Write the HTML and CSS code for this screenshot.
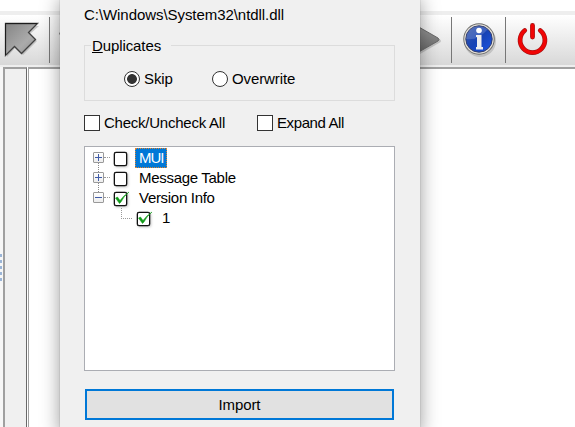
FILE: index.html
```html
<!DOCTYPE html>
<html lang="en">
<head>
<meta charset="utf-8">
<title>Import resources</title>
<link rel="stylesheet" href="styles.css">
</head>
<body>
<div class="window">
  <div class="toolbar">
    <div class="tools-left">
      <svg class="arrow" width="40" height="48" viewBox="0 0 40 48">
        <defs><linearGradient id="metal" x2="1" y2="1"><stop stop-color="#858585"/><stop offset=".6" stop-color="#ababab"/><stop offset="1" stop-color="#888"/></linearGradient></defs>
        <path d="M7 9H39L30 17L37 24L23 38L15 31L7 40Z" fill="#777" opacity=".35"/>
        <path d="M5.5 6.5H37.5L28.5 15.5L35.5 22.5L21.5 36.5L14.5 29.5L5.5 38.5Z" fill="url(#metal)" stroke="#414141" stroke-width="1.3"/>
        <path d="M5.5 38V6.5H37" fill="none" stroke="#1c1c1c"/>
      </svg>
      <i class="separator"></i>
      <svg class="down" width="15" height="20" viewBox="0 0 15 20"><path d="M0 3Q0 1 2 1H14V16Z" fill="#888"/></svg>
    </div>
    <div class="tools-right">
      <svg class="play" width="24" height="48" viewBox="0 0 24 48">
        <defs><linearGradient id="play" x2="0" y2="1"><stop stop-color="#999"/><stop offset="1" stop-color="#666"/></linearGradient></defs>
        <path d="M0 12L19 22Q23 24 19 26L0 37Z" fill="#999" opacity=".5"/>
        <path d="M-3 9L18 21Q20 22.5 18 24L-3 36Z" fill="url(#play)" stroke="#686868"/>
      </svg>
      <i class="separator"></i>
      <svg class="info" width="53" height="48" viewBox="0 0 53 48">
        <defs><linearGradient id="blue" x2="1" y2="1"><stop stop-color="#3858aa"/><stop offset=".5" stop-color="#1743b5"/><stop offset="1" stop-color="#1b55e4"/></linearGradient></defs>
        <circle cx="28" cy="24" r="16" fill="#888" opacity=".35"/>
        <circle cx="27" cy="22" r="15.7" fill="#686868"/>
        <circle cx="27" cy="22" r="14.8" fill="#e3dfd6"/>
        <circle cx="27" cy="22" r="13.2" fill="url(#blue)" stroke="#343f70"/>
        <path d="M14 22Q26 24 36 12Q31 9 25 9Q15 11 14 22Z" fill="#fff" opacity=".16"/>
        <circle cx="27" cy="13.5" r="2.8" fill="#fff"/>
        <path d="M24 18H29.5V30H31V32.5H24V30H25V20H24Z" fill="#eee"/>
      </svg>
      <i class="separator"></i>
      <svg class="power" width="54" height="48" viewBox="0 0 54 48">
        <g fill="none" stroke-linecap="round"><path d="M18.7 13.5A12.4 12.4 0 1 0 34.3 13.5M26.5 8.5V20" stroke="#a51212" stroke-width="4.8"/><path d="M18.7 13.5A12.4 12.4 0 1 0 34.3 13.5M26.5 8.5V20" stroke="#f00505" stroke-width="3.5"/></g>
      </svg>
    </div>
  </div>
  <div class="workspace">
    <div class="splitter"><i></i><i></i><i></i><i></i><i></i></div>
    <div class="side"></div>
    <div class="content"></div>
  </div>
</div>
<div class="dialog">
  <div class="path">C:\Windows\System32\ntdll.dll</div>
  <fieldset>
    <legend><u>D</u>uplicates</legend>
    <div class="radio-row">
      <span class="radio checked"></span><span class="skip">Skip</span>
      <span class="radio"></span><span>Overwrite</span>
    </div>
  </fieldset>
  <div class="checks">
    <span class="check"></span><span class="all">Check/Uncheck All</span>
    <span class="check"></span><span class="expand">Expand All</span>
  </div>
  <div class="tree">
    <div class="row"><span class="expander plus"></span><i class="dots"></i><span class="box"></span><span class="label selected">MUI</span></div>
    <div class="row"><span class="expander plus"></span><i class="dots"></i><span class="box"></span><span class="label">Message Table</span></div>
    <div class="row"><span class="expander"></span><i class="dots"></i><span class="box"><svg width="18" height="16" viewBox="0 0 18 16"><path d="M1.5 7L5.5 12.5L7 11Q10 5 15 1Q9 5 6 9.5L3.5 6Z" fill="#109a18" stroke="#109a18" stroke-width=".5"/></svg></span><span class="label">Version Info</span></div>
    <div class="row child"><i class="branch"></i><span class="box"><svg width="18" height="16" viewBox="0 0 18 16"><path d="M1.5 7L5.5 12.5L7 11Q10 5 15 1Q9 5 6 9.5L3.5 6Z" fill="#109a18" stroke="#109a18" stroke-width=".5"/></svg></span><span class="label">1</span></div>
  </div>
  <div class="import">Import</div>
</div>
</body>
</html>
```
FILE: styles.css
```css
* { box-sizing: border-box; }
html { overflow: hidden; }
body { position: relative; margin: 0; width: 575px; height: 427px; overflow: hidden; background: #fff; color: #000; font: 15px/20px "Liberation Sans", sans-serif; }
svg { display: block; flex: none; }
.window { height: 427px; display: flex; flex-direction: column; padding-top: 11px; }
.toolbar { height: 56px; flex: none; border-top: 4px solid #eee; border-bottom: 2px solid #eee; background: linear-gradient(#fff, #d8d8d8) padding-box; display: flex; justify-content: space-between; }
.tools-left, .tools-right { display: flex; padding-top: 2px; }
.tools-left .separator { margin-left: 9px; }
.tools-right { width: 155px; }
.tools-right .play + .separator { margin-left: 7px; }
.separator { width: 1px; height: 46px; flex: none; background: #777; }
.down { margin: 14px 0 0 9px; }
.workspace { flex: 1; display: flex; }
.splitter { width: 3px; padding-top: 187px; background: #f7f7f7; }
.splitter i { display: block; width: 2px; height: 3px; margin-bottom: 3px; background: #9bb5d7; }
.side { width: 24px; border: solid #a0a0a0; border-width: 2px 1px 0 2px; border-right-color: #696969; background: #f0f0f0; }
.content { flex: 1; margin-left: 1px; border-left: 1px solid #a0a0a0; border-top: 2px solid #a0a0a0; }
.dialog { position: absolute; left: 60px; top: -10px; width: 360px; height: 437px; padding: 15px 25px 0 24px; background: #f0f0f0; box-shadow: 0 0 1px rgba(0,0,0,.3), 0 9px 18px rgba(0,0,0,.4); }
.path { height: 30px; letter-spacing: -.06px; }
fieldset { height: 66px; margin: 0; padding: 0 0 0 39px; border: 1px solid #dcdcdc; min-width: 0; width: 311px; }
fieldset, .import { font: inherit; }
legend { height: 20px; line-height: 22px; margin-left: -33px; padding: 0 10px 0 1px; letter-spacing: -.1px; }
.radio-row, .checks { display: flex; align-items: center; }
.radio-row { margin-top: 14px; letter-spacing: -.1px; }
.radio { width: 16px; height: 16px; margin-right: 4px; border: 1px solid #333; border-radius: 50%; background: #fff; flex: none; }
.checked { background: radial-gradient(circle, #333 4.5px, #fff 5.3px); }
.skip { width: 68px; }
.checks { margin-top: 12px; height: 20px; }
.check { width: 16px; height: 16px; border: 1px solid #333; background: #fff; margin-right: 4px; }
.all { width: 153px; letter-spacing: -.24px; }
.expand { letter-spacing: -.4px; }
.tree { width: 311px; height: 225px; margin-top: 13px; padding: 1px 0 0 8px; border: 1px solid #abadb3; background: #fff; }
.row { height: 20px; display: flex; align-items: center; }
.expander { width: 11px; height: 11px; margin-top: -1px; border: 1px solid #999; border-radius: 1px; background: linear-gradient(#405ca8,#405ca8) center/7px 1px no-repeat, linear-gradient(#fff,#ededed); }
.plus { background: linear-gradient(#405ca8,#405ca8) center/7px 1px no-repeat, linear-gradient(#405ca8,#405ca8) center/1px 7px no-repeat, linear-gradient(#fff,#ededed); }
.row:nth-child(-n+2) .expander { position: relative; }
.row:nth-child(-n+2) .expander::after { content: ""; position: absolute; left: 4px; top: 10px; height: 9px; border-left: 1px dotted #888; }
.dots { width: 6px; margin-top: -1px; border-top: 1px dotted #999; }
.box { width: 13px; height: 14px; margin: 1px 8px 0 4px; border: 1px solid #111; border-radius: 2px; background: #fff; box-shadow: 0 0 0 .3px #111, 1px 1px 3px #bbb; flex: none; }
.box svg { margin: -2px 0 0 -1px; }
.label { height: 20px; padding: 0 4px; line-height: 20px; letter-spacing: -.3px; }
.selected { width: 32px; letter-spacing: -1px; color: #fff; background: #0078d7; outline: 1px dotted #e08430; outline-offset: -1px; }
.child { padding-left: 28px; }
.branch { width: 11px; height: 11px; margin-top: -9px; border: dotted #999; border-width: 0 0 1px 1px; }
.child .box { margin-left: 5px; }
.import { width: 309px; height: 31px; margin: 18px 0 0 1px; border: 2px solid #0078d7; background: #e1e1e1; text-align: center; line-height: 27px; letter-spacing: -.1px; }
```
